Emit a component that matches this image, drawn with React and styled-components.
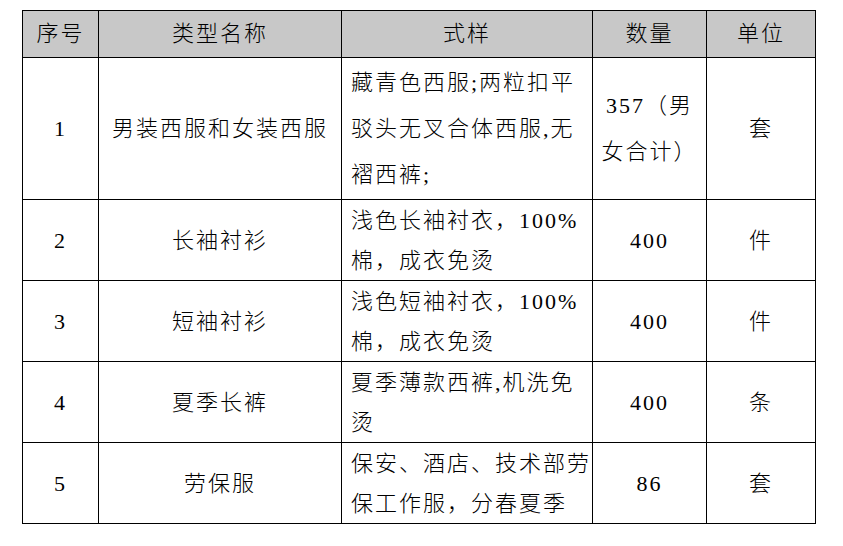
import React from 'react';
import styled, { createGlobalStyle } from 'styled-components';

const GlobalStyle = createGlobalStyle`
  html, body {
    margin: 0;
    padding: 0;
    background: #ffffff;
  }
  body {
    font-family: "Liberation Serif", "Noto Sans CJK SC", serif;
    color: #000000;
  }
`;

const Page = styled.div`
  padding: 10px 0 0 22px;
`;

const Grid = styled.div`
  display: grid;
  grid-template-columns: 76px 243px 251px 114px 109px;
  grid-template-rows: 47px 142px 81px 81px 81px 81px;
  width: 794px;
  box-sizing: border-box;
  border-top: 1px solid #000;
  border-left: 1px solid #000;
`;

const Row = styled.div`
  display: contents;
  line-height: ${({ $lineHeight }) => $lineHeight}px;
`;

const Cell = styled.div`
  box-sizing: border-box;
  border-right: 1px solid #000;
  border-bottom: 1px solid #000;
  display: flex;
  align-items: center;
  justify-content: ${({ $align }) => ($align === 'left' ? 'flex-start' : 'center')};
  text-align: ${({ $align }) => ($align === 'left' ? 'left' : 'center')};
  padding: ${({ $align }) => ($align === 'left' ? '0 0 0 9px' : '0')};
  padding-top: ${({ $shift }) => $shift || 0}px;
  background: ${({ $head }) => ($head ? '#c8c8c8' : '#ffffff')};
  font-size: 22px;
  font-weight: 300;
  letter-spacing: 2px;
  white-space: nowrap;
`;

const Lines = styled.div`
  display: flex;
  flex-direction: column;
`;

const headers = ['序号', '类型名称', '式样', '数量', '单位'];

const rows = [
  {
    no: '1',
    name: '男装西服和女装西服',
    style: ['藏青色西服;两粒扣平', '驳头无叉合体西服,无', '褶西裤;'],
    qty: ['357（男', '女合计）'],
    unit: '套',
    lineHeight: 46,
  },
  {
    no: '2',
    name: '长袖衬衫',
    style: ['浅色长袖衬衣，100%', '棉，成衣免烫'],
    qty: ['400'],
    unit: '件',
    lineHeight: 40,
  },
  {
    no: '3',
    name: '短袖衬衫',
    style: ['浅色短袖衬衣，100%', '棉，成衣免烫'],
    qty: ['400'],
    unit: '件',
    lineHeight: 40,
  },
  {
    no: '4',
    name: '夏季长裤',
    style: ['夏季薄款西裤,机洗免', '烫'],
    qty: ['400'],
    unit: '条',
    lineHeight: 40,
  },
  {
    no: '5',
    name: '劳保服',
    style: ['保安、酒店、技术部劳', '保工作服，分春夏季'],
    qty: ['86'],
    unit: '套',
    lineHeight: 40,
  },
];

const MultiLine = ({ lines }) => (
  <Lines>
    {lines.map((line) => (
      <span key={line}>{line}</span>
    ))}
  </Lines>
);

const App = () => (
  <Page>
    <GlobalStyle />
    <Grid>
      <Row $lineHeight={40}>
        {headers.map((h) => (
          <Cell key={h} $head>
            {h}
          </Cell>
        ))}
      </Row>
      {rows.map((r) => {
        const shift = r.lineHeight === 40 ? 2 : 0;
        return (
          <Row key={r.no} $lineHeight={r.lineHeight}>
            <Cell $shift={shift}>{r.no}</Cell>
            <Cell $shift={shift}>{r.name}</Cell>
            <Cell $align="left" $shift={shift}>
              <MultiLine lines={r.style} />
            </Cell>
            <Cell $shift={shift}>
              <MultiLine lines={r.qty} />
            </Cell>
            <Cell $shift={shift}>{r.unit}</Cell>
          </Row>
        );
      })}
    </Grid>
  </Page>
);

export default App;
